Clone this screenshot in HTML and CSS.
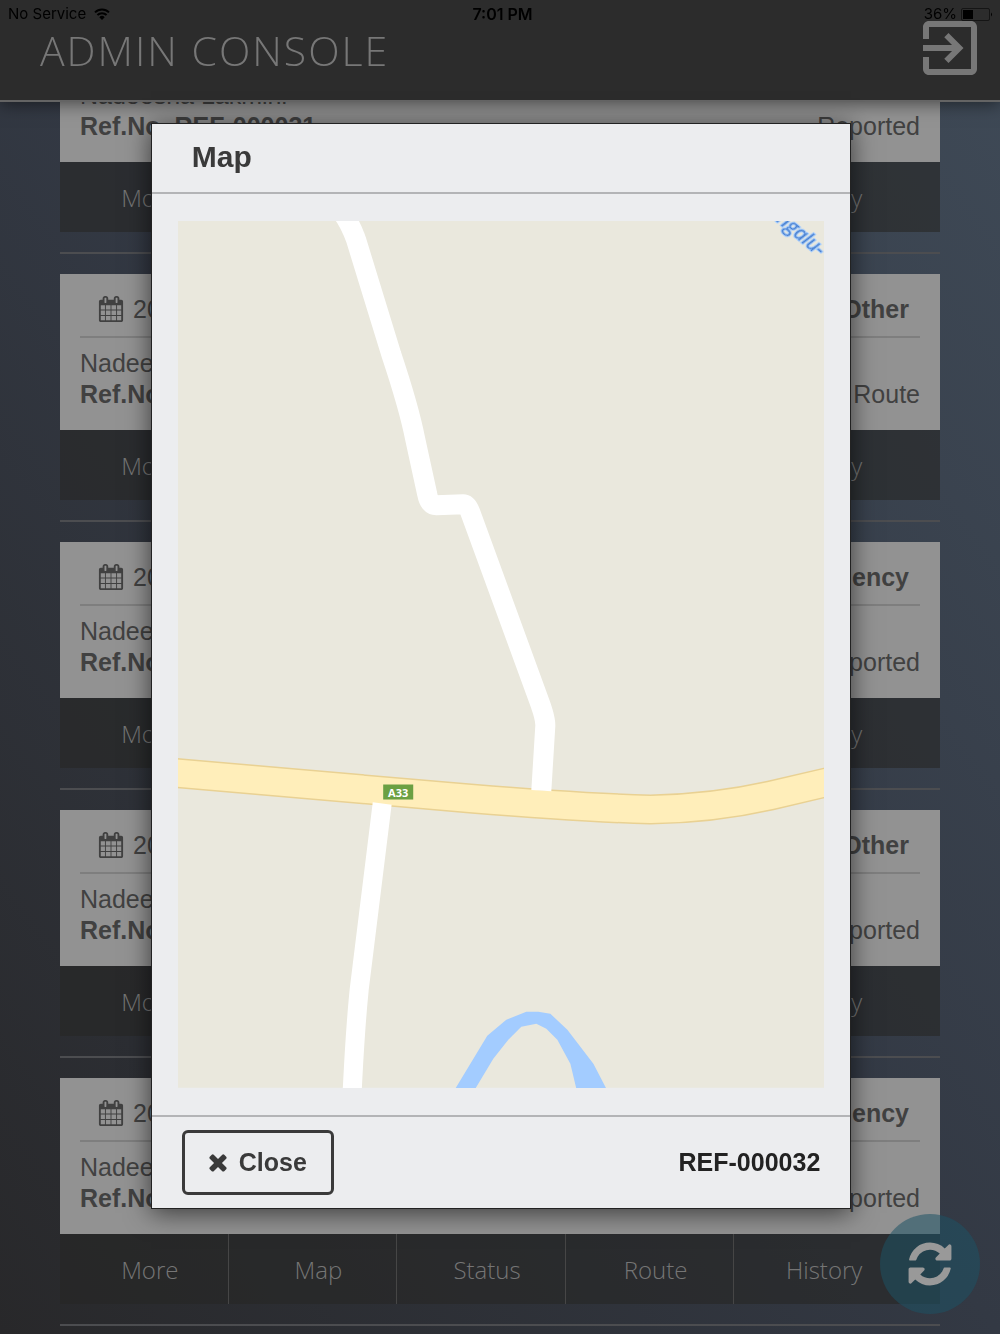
FILE: index.html
```html
<!DOCTYPE html>
<html lang="en">
<head>
  <meta charset="UTF-8" />
  <meta name="viewport" content="width=device-width, initial-scale=1.0" />
  <title>Admin Console</title>
  <link rel="stylesheet" href="styles.css">
</head>
<body>
  <!-- Shared icons -->
  <svg class="icon-defs" aria-hidden="true">
    <symbol id="icon-calendar" viewBox="0 0 1792 1792">
      <path d="M192 1664h288v-288h-288v288zm352 0h320v-288h-320v288zm-352-352h288v-320h-288v320zm352 0h320v-320h-320v320zm-352-384h288v-288h-288v288zm736 736h320v-288h-320v288zm-384-736h320v-288h-320v288zm768 736h288v-288h-288v288zm-384-352h320v-320h-320v320zm-352-864v-288q0-13-9.5-22.5t-22.5-9.5h-64q-13 0-22.5 9.5t-9.5 22.5v288q0 13 9.5 22.5t22.5 9.5h64q13 0 22.5-9.5t9.5-22.5zm736 864h288v-320h-288v320zm-384-384h320v-288h-320v288zm384 0h288v-288h-288v288zm32-480v-288q0-13-9.5-22.5t-22.5-9.5h-64q-13 0-22.5 9.5t-9.5 22.5v288q0 13 9.5 22.5t22.5 9.5h64q13 0 22.5-9.5t9.5-22.5zm384-64v1280q0 52-38 90t-90 38h-1408q-52 0-90-38t-38-90v-1280q0-52 38-90t90-38h128v-96q0-66 47-113t113-47h64q66 0 113 47t47 113v96h384v-96q0-66 47-113t113-47h64q66 0 113 47t47 113v96h128q52 0 90 38t38 90z"/>
    </symbol>
  </svg>

  <header class="app-header">
    <div class="status-bar">
      <span class="carrier">No Service
        <svg class="wifi" viewBox="0 0 16 12" aria-hidden="true">
          <path d="M1 4.4a10 10 0 0 1 14 0M3.4 7a6.600 6.600 0 0 1 9.200 0" fill="none" stroke="currentColor" stroke-width="2"/>
          <path d="M8 12L5.300 9.200a3.800 3.800 0 0 1 5.400 0z" fill="currentColor"/>
        </svg>
      </span>
      <span class="clock">7:01 PM</span>
      <span class="battery">36%
        <svg class="battery-icon" viewBox="0 0 32 13" aria-hidden="true">
          <rect x="0.500" y="0.500" width="28" height="12" rx="1.500" fill="none" stroke="#151515"/>
          <rect x="2" y="2" width="10" height="9" fill="#000"/>
          <path d="M30 4.500q2 2 0 4z" fill="#000"/>
        </svg>
      </span>
    </div>
    <div class="title-bar">
      <h1>ADMIN CONSOLE</h1>
      <button class="logout" type="button" aria-label="Log out">
        <svg viewBox="3 3 18 18" aria-hidden="true"><path d="M10.090 15.590L11.500 17l5-5-5-5-1.410 1.410L12.670 11H3v2h9.670l-2.580 2.590zM19 3H5c-1.110 0-2 .9-2 2v4h2V5h14v14H5v-4H3v4c0 1.100.890 2 2 2h14c1.100 0 2-.9 2-2V5c0-1.100-.9-2-2-2z"/></svg>
      </button>
    </div>
  </header>

  <!-- Complaint list -->
  <main class="list">
    <article class="item">
      <div class="card">
        <div class="card-top"><svg class="calendar"><use href="#icon-calendar"/></svg><span>2016</span><strong>Other</strong></div>
        <p>Nadeesha Lakmini</p>
        <p class="card-ref"><strong>Ref.No. REF-000031</strong><span>Reported</span></p>
      </div>
      <nav class="actions"><button type="button">More</button><button type="button">Map</button><button type="button">Status</button><button type="button">Route</button><button type="button">History</button></nav>
    </article>

    <article class="item">
      <div class="card">
        <div class="card-top"><svg class="calendar"><use href="#icon-calendar"/></svg><span>2016</span><strong>Other</strong></div>
        <p>Nadeesha Lakmini</p>
        <p class="card-ref"><strong>Ref.No.</strong><span>Route</span></p>
      </div>
      <nav class="actions"><button type="button">More</button><button type="button">Map</button><button type="button">Status</button><button type="button">Route</button><button type="button">History</button></nav>
    </article>

    <article class="item">
      <div class="card">
        <div class="card-top"><svg class="calendar"><use href="#icon-calendar"/></svg><span>2016</span><strong>Emergency</strong></div>
        <p>Nadeesha Lakmini</p>
        <p class="card-ref"><strong>Ref.No.</strong><span>Reported</span></p>
      </div>
      <nav class="actions"><button type="button">More</button><button type="button">Map</button><button type="button">Status</button><button type="button">Route</button><button type="button">History</button></nav>
    </article>

    <article class="item">
      <div class="card">
        <div class="card-top"><svg class="calendar"><use href="#icon-calendar"/></svg><span>2016</span><strong>Other</strong></div>
        <p>Nadeesha Lakmini</p>
        <p class="card-ref"><strong>Ref.No.</strong><span>Reported</span></p>
      </div>
      <nav class="actions"><button type="button">More</button><button type="button">Map</button><button type="button">Status</button><button type="button">Route</button><button type="button">History</button></nav>
    </article>

    <article class="item">
      <div class="card">
        <div class="card-top"><svg class="calendar"><use href="#icon-calendar"/></svg><span>2016</span><strong>Emergency</strong></div>
        <p>Nadeesha Lakmini</p>
        <p class="card-ref"><strong>Ref.No.</strong><span>Reported</span></p>
      </div>
      <nav class="actions"><button type="button">More</button><button type="button">Map</button><button type="button">Status</button><button type="button">Route</button><button type="button">History</button></nav>
    </article>
  </main>

  <button class="refresh" type="button" aria-label="Refresh">
    <svg viewBox="0 0 1792 1792" aria-hidden="true"><path d="M1639 1056q0 5-1 7-64 268-268 434.500t-478 166.500q-146 0-282.500-55t-243.500-157l-129 129q-19 19-45 19t-45-19-19-45v-448q0-26 19-45t45-19h448q26 0 45 19t19 45-19 45l-137 137q71 66 161 102t187 36q134 0 250-65t186-179q11-17 53-117 8-23 30-23h192q13 0 22.500 9.500t9.500 22.500zm25-800v448q0 26-19 45t-45 19h-448q-26 0-45-19t-19-45 19-45l138-138q-148-137-349-137-134 0-250 65t-186 179q-11 17-53 117-8 23-30 23h-199q-13 0-22.500-9.500t-9.500-22.500v-7q65-268 270-434.500t480-166.500q146 0 284 55.500t245 156.500l130-129q19-19 45-19t45 19 19 45z"/></svg>
  </button>

  <!-- Map popup -->
  <div class="modal-layer">
    <section class="modal" role="dialog" aria-labelledby="mapTitle">
      <h2 class="modal-header" id="mapTitle">Map</h2>
      <div class="modal-body">
        <svg class="map" viewBox="178 222 646 866" role="img" aria-label="Road map">
          <rect x="178" y="222" width="646" height="866" fill="#eae8dd"/>
          <!-- river -->
          <path d="M455 1089L487 1036L506 1020L526 1012H538L550 1014L567 1030L593 1064L606 1089H576L570 1064L557 1040L546 1029L536 1024L521 1027L508 1040L493 1059L475 1089Z" fill="#a3ccff"/>
          <!-- main road -->
          <g fill="none">
            <path d="M170 773L470 799Q580 808 650 810Q712 809 770 796L834 781" stroke="#e9d193" stroke-width="30"/>
            <path d="M170 773L470 799Q580 808 650 810Q712 809 770 796L834 781" stroke="#ffeeba" stroke-width="27"/>
            <path d="M341 212Q350 224 356 241L391 355Q409 409 415 440L427 495Q429 506 436 506L463 505Q467 505 470 513L539 702Q545 718 545 726L541 791" stroke="#fff" stroke-width="20" stroke-linejoin="round"/>
            <path d="M382 804L359 990Q355 1030 352 1092" stroke="#fff" stroke-width="19"/>
          </g>
          <rect x="383" y="785" width="30" height="15" fill="#6ba043"/>
          <text class="road-no" x="398" y="797" text-anchor="middle">A33</text>
          <text class="river-name" transform="translate(775 222) rotate(40)">ngalu-</text>
        </svg>
      </div>
      <footer class="modal-footer">
        <button class="close" type="button">
          <svg viewBox="0 0 1792 1792" aria-hidden="true"><path d="M1490 1322q0 40-28 68l-136 136q-28 28-68 28t-68-28l-294-294-294 294q-28 28-68 28t-68-28l-136-136q-28-28-28-68t28-68l294-294-294-294q-28-28-28-68t28-68l136-136q28-28 68-28t68 28l294 294 294-294q28-28 68-28t68 28l136 136q28 28 28 68t-28 68l-294 294 294 294q28 28 28 68z"/></svg>
          Close
        </button>
        <strong>REF-000032</strong>
      </footer>
    </section>
  </div>
</body>
</html>
```
FILE: styles.css
```css
:root {
  --header-bg: #2c2c2c;
  --header-text: #777777;
  --card-bg: #929292;
  --card-text: #414141;
  --modal-bg: #ecedef;
  --modal-text: #3a3a3a;
}

* {
  box-sizing: border-box;
}

body {
  margin: 0;
  height: 100vh;
  overflow: hidden;
  font-family: "Liberation Sans", Arial, sans-serif;
  font-size: 25px;
  color: var(--card-text);
  background: linear-gradient(to top right, #28282a, #333944 50%, #3f4a57);
}

h1, h2, p {
  margin: 0;
}

button {
  font: inherit;
  color: inherit;
  background: none;
  border: none;
  padding: 0;
  cursor: pointer;
}

svg {
  display: block;
  flex: none;
  fill: currentColor;
}

.icon-defs {
  position: absolute;
  width: 0;
  height: 0;
}

/* Header */
.app-header {
  position: fixed;
  top: 0;
  left: 0;
  right: 0;
  z-index: 1;
  background: var(--header-bg);
  border-bottom: 2px solid #646464;
  box-shadow: 0 2px 16px rgba(0, 0, 0, 0.5);
}

.status-bar {
  position: absolute;
  top: 0;
  left: 0;
  right: 0;
  display: grid;
  grid-template-columns: 1fr auto 1fr;
  padding: 0 7px 0 8px;
  line-height: 28px;
  font-family: Inter, sans-serif;
  font-size: 15px;
  color: #000;
}

.carrier, .battery {
  display: flex;
  align-items: center;
  gap: 8px;
}

.battery {
  justify-content: flex-end;
  gap: 4px;
}

.clock {
  padding-left: 4px;
  font-size: 16px;
  font-weight: 600;
}

.wifi {
  width: 16px;
  height: 12px;
}

.battery-icon {
  width: 32px;
  height: 13px;
}

.title-bar {
  display: flex;
  justify-content: space-between;
  align-items: center;
  height: 100px;
  padding: 0 23px 4px 40px;
  color: var(--header-text);
}

.title-bar h1 {
  padding-top: 4px;
  font-family: "Open Sans", sans-serif;
  font-size: 41px;
  font-weight: 300;
  line-height: 40px;
  letter-spacing: 2px;
}

.logout svg {
  width: 54px;
  height: 54px;
}

/* List */
.list {
  padding: 6px 60px 0;
}

.item {
  padding-bottom: 20px;
  margin-bottom: 20px;
  border-bottom: 2px solid #4c4d50;
}

.card {
  padding: 20px;
  line-height: 31px;
  background: var(--card-bg);
}

.card-top {
  display: flex;
  align-items: center;
  gap: 9px;
  padding: 0 11px 12px 18px;
  margin-bottom: 10px;
  line-height: 30px;
  border-bottom: 2px solid #7e7e7e;
}

.card-top strong {
  margin-left: auto;
}

.calendar {
  width: 26px;
  height: 26px;
}

.card-ref {
  display: flex;
  justify-content: space-between;
}

.actions {
  display: flex;
  padding-right: 38px;
  background: rgba(38, 38, 36, 0.6);
}

.actions button {
  flex: 1;
  height: 70px;
  padding-left: 12px;
  font-family: "Open Sans", sans-serif;
  font-size: 24px;
  font-weight: 300;
  color: #757575;
  border-right: 1px solid #464646;
}

.actions button:last-child {
  border-right: none;
}

.refresh {
  position: fixed;
  right: 20px;
  bottom: 20px;
  display: flex;
  justify-content: center;
  align-items: center;
  width: 100px;
  height: 100px;
  border-radius: 50%;
  color: #999999;
  background: rgba(30, 82, 100, 0.55);
}

.refresh svg {
  width: 50px;
  height: 50px;
}

/* Popup */
.modal-layer {
  position: fixed;
  inset: 0;
  z-index: 2;
  display: flex;
  justify-content: center;
  align-items: center;
  padding: 0 0 2px 2px;
}

.modal {
  box-sizing: content-box;
  width: 70%;
  color: var(--modal-text);
  background: var(--modal-bg);
  border: 1px solid #222;
  box-shadow: 0 4px 24px rgba(0, 0, 0, 0.6);
}

.modal-header {
  padding: 0 40px 2px;
  font-size: 30px;
  line-height: 66px;
  border-bottom: 2px solid #b3b4b6;
}

.modal-body {
  padding: 27px 26px;
}

.map {
  width: 100%;
}

.road-no {
  font: bold 11px "Open Sans", sans-serif;
  fill: #fff;
}

.river-name {
  font: italic 20px "Open Sans", sans-serif;
  fill: #4a80cf;
  stroke: #a3ccff;
  stroke-width: 2px;
  paint-order: stroke;
}

.modal-footer {
  display: flex;
  justify-content: space-between;
  align-items: center;
  padding: 13px 30px;
  border-top: 2px solid #b3b4b6;
}

.modal-footer strong {
  color: #222;
}

.close {
  display: flex;
  align-items: center;
  gap: 8px;
  height: 65px;
  padding: 0 24px 0 20px;
  font-weight: bold;
  border: 3px solid var(--modal-text);
  border-radius: 6px;
}

.close svg {
  width: 26px;
  height: 26px;
}
```
